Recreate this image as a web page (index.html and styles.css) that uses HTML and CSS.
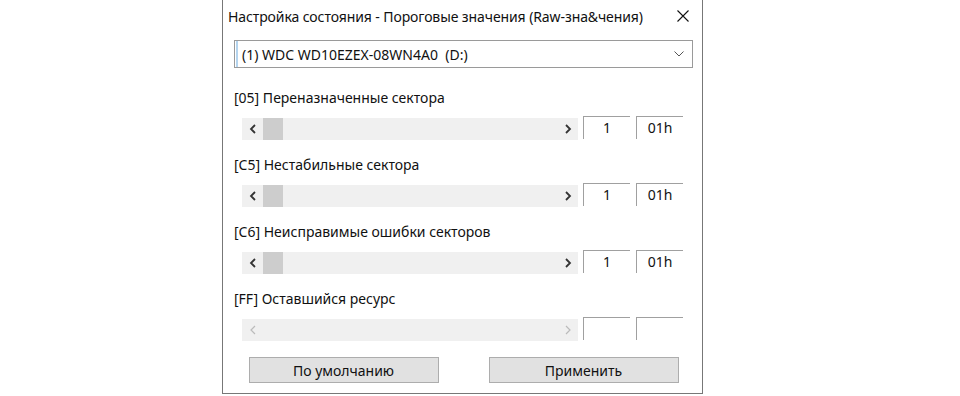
FILE: index.html
```html
<!DOCTYPE html>
<html lang="ru">
<head>
  <meta charset="UTF-8" />
  <title>Настройка состояния</title>
  <link rel="stylesheet" href="styles.css">
</head>
<body>

  <div class="dialog">
    <div class="titlebar">
      <span class="title">Настройка состояния - Пороговые значения (Raw-зна&amp;чения)</span>
      <svg class="close" width="12" height="12" viewBox="0 0 12 12">
        <path d="M0.5 0.5 L11.5 11.5 M11.5 0.5 L0.5 11.5" stroke="#111" stroke-width="1.1" fill="none"/>
      </svg>
    </div>

    <div class="content">
      <div class="combo">
        <span class="caret"></span>
        <span class="combo-text">(1) WDC WD10EZEX-08WN4A0&nbsp;&nbsp;(D:)</span>
        <svg class="chevron" width="10" height="6" viewBox="0 0 10 6">
          <path d="M0.5 0.5 L5 5 L9.5 0.5" stroke="#555" stroke-width="1" fill="none"/>
        </svg>
      </div>

      <div class="group">
        <div class="label">[05] Переназначенные сектора</div>
        <div class="row">
          <div class="scroll">
            <div class="arrow"><svg width="8" height="10" viewBox="0 0 8 10"><path d="M6 1 L2 5 L6 9" stroke="#333" stroke-width="1.8" fill="none"/></svg></div>
            <div class="thumb"></div>
            <div class="track"></div>
            <div class="arrow"><svg width="8" height="10" viewBox="0 0 8 10"><path d="M2 1 L6 5 L2 9" stroke="#333" stroke-width="1.8" fill="none"/></svg></div>
          </div>
          <div class="edit">1</div>
          <div class="edit">01h</div>
        </div>
      </div>

      <div class="group">
        <div class="label">[C5] Нестабильные сектора</div>
        <div class="row">
          <div class="scroll">
            <div class="arrow"><svg width="8" height="10" viewBox="0 0 8 10"><path d="M6 1 L2 5 L6 9" stroke="#333" stroke-width="1.8" fill="none"/></svg></div>
            <div class="thumb"></div>
            <div class="track"></div>
            <div class="arrow"><svg width="8" height="10" viewBox="0 0 8 10"><path d="M2 1 L6 5 L2 9" stroke="#333" stroke-width="1.8" fill="none"/></svg></div>
          </div>
          <div class="edit">1</div>
          <div class="edit">01h</div>
        </div>
      </div>

      <div class="group">
        <div class="label">[C6] Неисправимые ошибки секторов</div>
        <div class="row">
          <div class="scroll">
            <div class="arrow"><svg width="8" height="10" viewBox="0 0 8 10"><path d="M6 1 L2 5 L6 9" stroke="#333" stroke-width="1.8" fill="none"/></svg></div>
            <div class="thumb"></div>
            <div class="track"></div>
            <div class="arrow"><svg width="8" height="10" viewBox="0 0 8 10"><path d="M2 1 L6 5 L2 9" stroke="#333" stroke-width="1.8" fill="none"/></svg></div>
          </div>
          <div class="edit">1</div>
          <div class="edit">01h</div>
        </div>
      </div>

      <div class="group">
        <div class="label">[FF] Оставшийся ресурс</div>
        <div class="row">
          <div class="scroll disabled">
            <div class="arrow"><svg width="8" height="10" viewBox="0 0 8 10"><path d="M6 1 L2 5 L6 9" stroke="#bbb" stroke-width="1.2" fill="none"/></svg></div>
            <div class="track"></div>
            <div class="arrow"><svg width="8" height="10" viewBox="0 0 8 10"><path d="M2 1 L6 5 L2 9" stroke="#bbb" stroke-width="1.2" fill="none"/></svg></div>
          </div>
          <div class="edit"></div>
          <div class="edit"></div>
        </div>
      </div>

      <div class="buttons">
        <button>По умолчанию</button>
        <button>Применить</button>
      </div>
    </div>
  </div>

</body>
</html>
```

FILE: styles.css
```css
body {
  margin: 0;
  background: #fff;
  font-family: 'Noto Sans', 'Open Sans', sans-serif;
  font-size: 14px;
  color: #111;
}

.dialog {
  margin-left: 222px;
  width: 479px;
  height: 393px;
  border: 1px solid #777;
  border-top: none;
  background: #fff;
  box-sizing: content-box;
}

.titlebar {
  height: 32px;
  display: flex;
  align-items: center;
  justify-content: space-between;
  padding: 0 13px 0 5px;
}

.title {
  font-size: 14px;
  letter-spacing: -0.1px;
}

.close {
  display: block;
}

.content {
  padding: 8px 9px 0 11px;
}

.combo {
  height: 26px;
  border: 1px solid #9a9a9a;
  display: flex;
  align-items: center;
  position: relative;
}

.caret {
  width: 2px;
  height: 26px;
  background: #b4d4ee;
  margin-left: 1px;
}

.combo-text {
  margin-left: 4px;
  flex: 1;
}

.chevron {
  margin-right: 8px;
}

.group {
  margin-top: 20px;
}

.group + .group {
  margin-top: 16px;
}

.label {
  height: 20px;
  line-height: 20px;
  padding-left: 0;
}

.row {
  display: flex;
  align-items: flex-start;
  margin-top: 8px;
  padding-left: 8px;
  height: 23px;
}

.scroll {
  width: 336px;
  height: 22px;
  margin-top: 2px;
  display: flex;
  background: #f0f0f0;
  margin-right: 5px;
}

.arrow {
  width: 21px;
  display: flex;
  align-items: center;
  justify-content: center;
}

.thumb {
  width: 20px;
  background: #cdcdcd;
}

.track {
  flex: 1;
}

.edit {
  width: 47px;
  height: 23px;
  box-sizing: border-box;
  border-top: 1px solid #a0a0a0;
  border-left: 1px solid #a0a0a0;
  text-align: center;
  line-height: 22px;
  margin-right: 6px;
}

.buttons {
  display: flex;
  justify-content: center;
  gap: 50px;
  margin-top: 17px;
}

button {
  width: 190px;
  height: 26px;
  background: #e1e1e1;
  border: 1px solid #adadad;
  font-family: inherit;
  font-size: 14px;
  color: #111;
  padding: 0;
}
```
